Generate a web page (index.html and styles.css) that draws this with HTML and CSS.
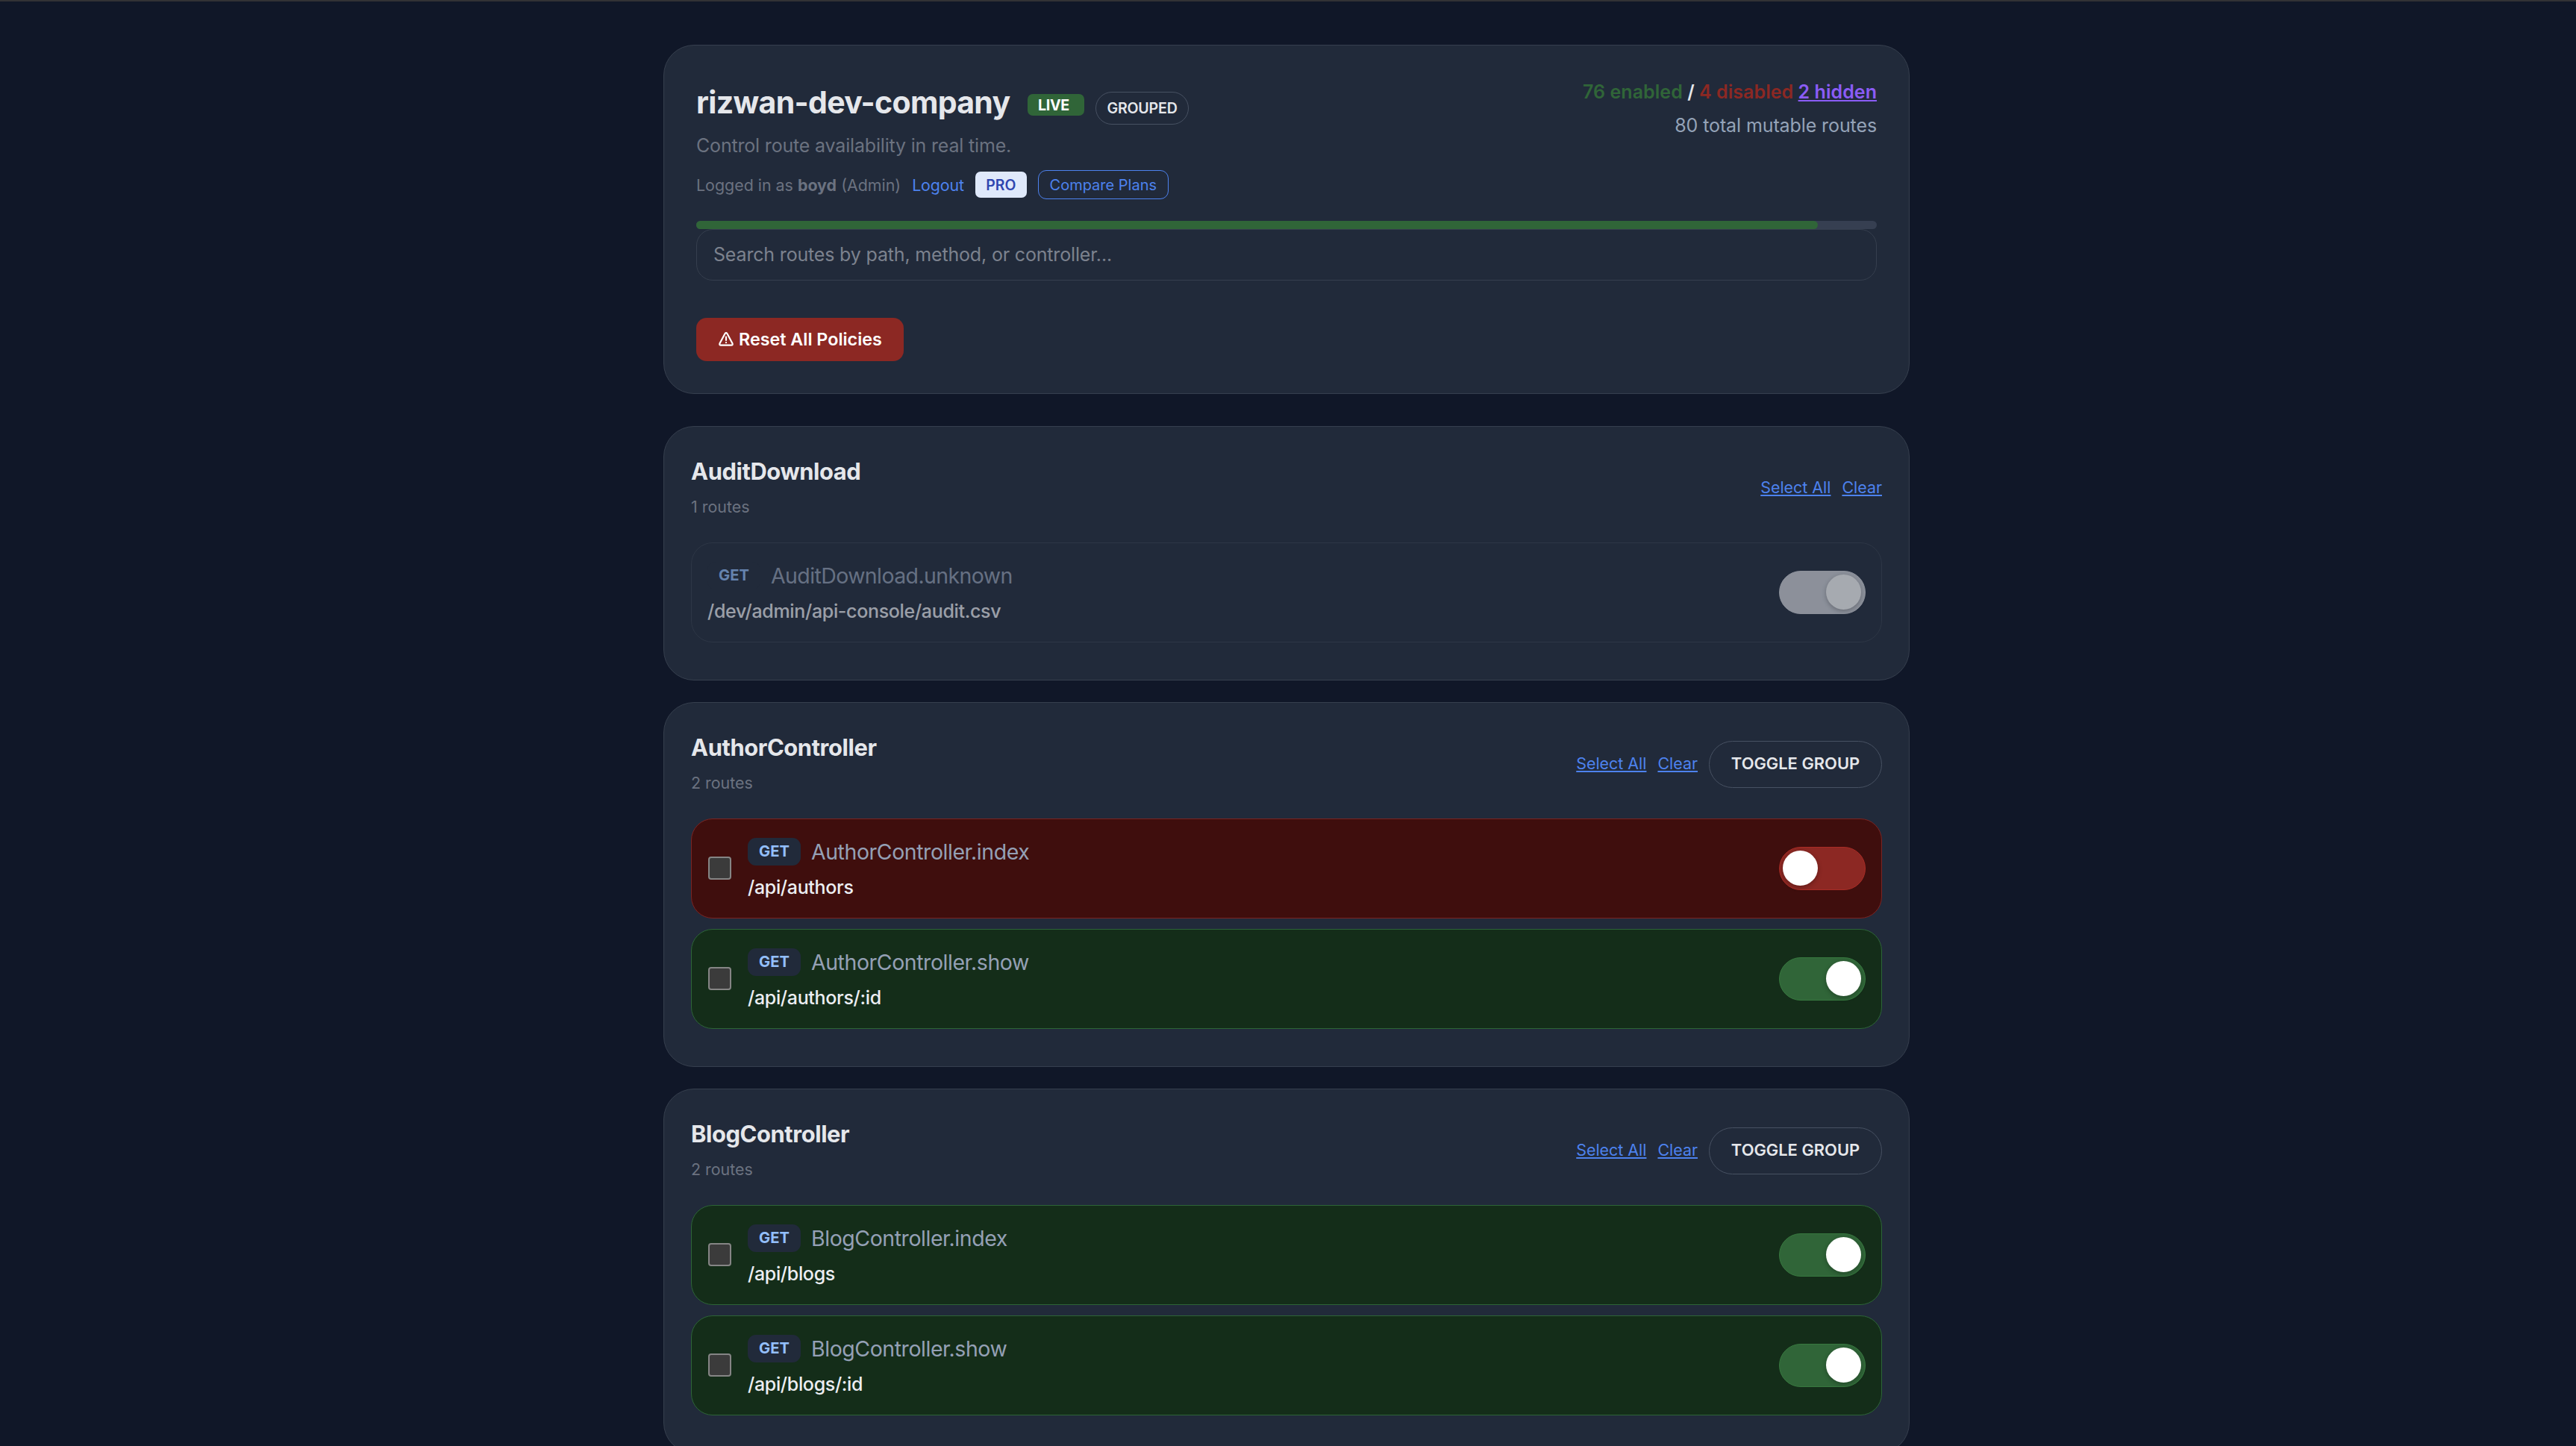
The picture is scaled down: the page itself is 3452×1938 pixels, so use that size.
FILE: index.html
```html
<!DOCTYPE html>
<html lang="en">
<head>
  <meta charset="UTF-8" />
  <meta name="viewport" content="width=device-width, initial-scale=1.0"/>
  <title>API Console</title>
  <link rel="stylesheet" href="styles.css">
</head>
<body>

  <div class="container">

    <!-- Header -->
    <header class="card header">
      <div class="header-top">
        <div>
          <div class="title-row">
            <h1>rizwan-dev-company</h1>
            <span class="badge-live">LIVE</span>
            <button class="pill">GROUPED</button>
          </div>
          <p class="subtitle">Control route availability in real time.</p>
          <div class="user-row">
            <span>Logged in as <strong>boyd</strong> (Admin)</span>
            <a class="logout" href="#">Logout</a>
            <span class="badge-pro">PRO</span>
            <a class="plans" href="#">Compare Plans</a>
          </div>
        </div>
        <div class="stats">
          <div class="counts"><span class="on">76 enabled</span> / <span class="off">4 disabled</span> <a href="#">2 hidden</a></div>
          <div class="total">80 total mutable routes</div>
        </div>
      </div>
      <div class="progress"><div class="progress-fill" style="width: 95%"></div></div>
      <input class="search" type="text" placeholder="Search routes by path, method, or controller..." />
      <button class="reset">
        <svg width="20" height="19" viewBox="0 0 20 19" fill="none" stroke="#fff" stroke-width="2.2" stroke-linejoin="round" stroke-linecap="round">
          <path d="M8.6 2.1 1.5 15.2Q.8 17.7 3 17.7H17Q19.2 17.7 18.5 15.2L11.4 2.1Q10 .3 8.6 2.1Z"/>
          <path d="M10 6.6v4.4M10 14.1v.1"/>
        </svg>
        Reset All Policies
      </button>
    </header>

    <!-- Route groups -->
    <section class="card group">
      <div class="group-head">
        <div>
          <h2>AuditDownload</h2>
          <p>1 routes</p>
        </div>
        <div class="actions">
          <a href="#">Select All</a>
          <a href="#">Clear</a>
        </div>
      </div>
      <div class="route locked">
        <div class="info">
          <div class="line"><span class="method">GET</span><span class="name">AuditDownload.unknown</span></div>
          <div class="path">/dev/admin/api-console/audit.csv</div>
        </div>
        <div class="toggle"><span class="knob"></span></div>
      </div>
    </section>

    <section class="card group">
      <div class="group-head">
        <div>
          <h2>AuthorController</h2>
          <p>2 routes</p>
        </div>
        <div class="actions">
          <a href="#">Select All</a>
          <a href="#">Clear</a>
          <button class="toggle-group">TOGGLE GROUP</button>
        </div>
      </div>
      <div class="route disabled">
        <input type="checkbox" class="check" />
        <div class="info">
          <div class="line"><span class="method">GET</span><span class="name">AuthorController.index</span></div>
          <div class="path">/api/authors</div>
        </div>
        <div class="toggle"><span class="knob"></span></div>
      </div>
      <div class="route enabled">
        <input type="checkbox" class="check" />
        <div class="info">
          <div class="line"><span class="method">GET</span><span class="name">AuthorController.show</span></div>
          <div class="path">/api/authors/:id</div>
        </div>
        <div class="toggle"><span class="knob"></span></div>
      </div>
    </section>

    <section class="card group">
      <div class="group-head">
        <div>
          <h2>BlogController</h2>
          <p>2 routes</p>
        </div>
        <div class="actions">
          <a href="#">Select All</a>
          <a href="#">Clear</a>
          <button class="toggle-group">TOGGLE GROUP</button>
        </div>
      </div>
      <div class="route enabled">
        <input type="checkbox" class="check" />
        <div class="info">
          <div class="line"><span class="method">GET</span><span class="name">BlogController.index</span></div>
          <div class="path">/api/blogs</div>
        </div>
        <div class="toggle"><span class="knob"></span></div>
      </div>
      <div class="route enabled">
        <input type="checkbox" class="check" />
        <div class="info">
          <div class="line"><span class="method">GET</span><span class="name">BlogController.show</span></div>
          <div class="path">/api/blogs/:id</div>
        </div>
        <div class="toggle"><span class="knob"></span></div>
      </div>
    </section>

  </div>

</body>
</html>
```

FILE: styles.css
```css
* {
  box-sizing: border-box;
}

body {
  margin: 0;
  height: 1938px;
  overflow: hidden;
  border-top: 2px solid #323235;
  background: #101728;
  color: #e5e7eb;
  font-family: Inter, "Liberation Sans", sans-serif;
}

h1, h2, p {
  margin: 0;
}

button, input {
  font-family: inherit;
  margin: 0;
}

.container {
  width: 1670px;
  margin-left: 889px;
  padding-top: 58px;
}

.card {
  background: #212a3a;
  border: 1px solid #363f4e;
  border-radius: 41px;
}

/* Header */
.header {
  height: 468px;
  padding: 39px 43px 43px;
  margin-bottom: 43px;
}

.header-top {
  display: flex;
  justify-content: space-between;
}

.title-row {
  display: flex;
  align-items: center;
  height: 74px;
}

h1 {
  width: 444px;
  font-size: 41px;
  font-weight: 650;
  letter-spacing: -0.68px;
  white-space: nowrap;
}

.badge-live {
  width: 76px;
  height: 29px;
  margin: 7px 15px 0 0;
  padding-left: 14px;
  border-radius: 7px;
  background: #306538;
  color: #fff;
  font-size: 19.6px;
  font-weight: 700;
  line-height: 30px;
  letter-spacing: -0.3px;
}

.pill {
  width: 125px;
  height: 44px;
  margin-top: 16px;
  padding: 0;
  border: 1px solid #475162;
  border-radius: 22px;
  background: none;
  color: #e5e7eb;
  font-size: 19.6px;
  font-weight: 600;
  letter-spacing: -0.2px;
}

.subtitle {
  color: #6b7280;
  font-size: 25px;
  line-height: 42px;
  letter-spacing: -0.18px;
}

.user-row {
  display: flex;
  align-items: center;
  gap: 15px;
  height: 39px;
  margin-top: 12px;
  color: #6b7280;
  font-size: 21.4px;
}

.logout {
  color: #4d82ee;
  text-decoration: none;
  letter-spacing: -0.15px;
}

.badge-pro {
  width: 69px;
  height: 35px;
  border-radius: 7px;
  background: #dfe9fb;
  color: #2f46b0;
  font-size: 19.4px;
  font-weight: 600;
  line-height: 36px;
  text-align: center;
}

.plans {
  width: 175px;
  height: 39px;
  border: 1px solid #4d82ee;
  border-radius: 11px;
  color: #4d82ee;
  font-size: 20px;
  line-height: 38px;
  text-align: center;
  text-decoration: none;
}

.stats {
  padding-top: 1px;
  font-size: 25px;
  line-height: 45px;
  text-align: right;
}

.counts {
  font-weight: 600;
  letter-spacing: 0.05px;
}

.on {
  color: #306538;
}

.off {
  color: #8c2823;
}

.counts a {
  color: #8b5cf6;
  text-underline-offset: 2px;
  text-decoration-thickness: 2px;
}

.total {
  color: #94a3b8;
  letter-spacing: -0.1px;
}

.progress {
  height: 11px;
  margin-top: 29px;
  border-radius: 6px;
  background: #363f51;
}

.progress-fill {
  height: 11px;
  border-radius: 6px;
  background: #306538;
}

.search {
  display: block;
  width: 100%;
  height: 69px;
  padding: 0 21px 1px 22px;
  border: 1px solid #363f4e;
  border-radius: 22px;
  background: #212a3a;
  color: #e5e7eb;
  font-size: 25px;
  letter-spacing: -0.17px;
}

.search::placeholder {
  color: #7c828e;
}

.reset {
  display: flex;
  align-items: center;
  gap: 7px;
  width: 278px;
  height: 58px;
  margin-top: 50px;
  padding: 0 0 2px 30px;
  border: 0;
  border-radius: 14px;
  background: #8c2823;
  color: #fff;
  font-size: 23.3px;
  font-weight: 600;
  white-space: nowrap;
}

/* Route groups */
.group {
  padding: 35px 36px 36px;
  margin-bottom: 29px;
}

.group-head {
  display: flex;
  justify-content: space-between;
  align-items: center;
  margin-bottom: 26px;
}

h2 {
  font-size: 30.9px;
  font-weight: 650;
  line-height: 50px;
  letter-spacing: -0.42px;
}

.group-head p {
  color: #6b7280;
  font-size: 21.4px;
  line-height: 44px;
}

.actions {
  display: flex;
  align-items: center;
  gap: 15px;
  font-size: 21.4px;
}

.actions a {
  padding-bottom: 2px;
  color: #4d82ee;
  text-underline-offset: 2px;
  text-decoration-thickness: 2px;
}

.toggle-group {
  width: 232px;
  height: 63px;
  padding: 0 0 2px;
  border: 1px solid #475162;
  border-radius: 32px;
  background: none;
  color: #e5e7eb;
  font-size: 21.9px;
  font-weight: 600;
}

.route {
  display: flex;
  align-items: center;
  height: 134px;
  margin-bottom: 14px;
  padding: 0 21px;
  border: 1px solid #363f4e;
  border-radius: 29px;
}

.enabled {
  background: #142d19;
  border-color: #2d6437;
}

.disabled {
  background: #3f0e0d;
  border-color: #7a2422;
}

.locked {
  opacity: 0.6;
}

.check {
  appearance: none;
  width: 31px;
  height: 31px;
  margin: 0 22px 2px 1px;
  border: 2px solid #858585;
  border-radius: 4px;
  background: #3b3b3b;
}

.info {
  flex: 1;
  padding-top: 1px;
}

.line {
  display: flex;
  align-items: center;
  height: 49px;
}

.method {
  width: 71px;
  height: 37px;
  margin-right: 14px;
  border-radius: 11px;
  background: #212a3a;
  color: #93bffb;
  font-size: 20.2px;
  font-weight: 700;
  line-height: 36px;
  text-align: center;
}

.name {
  color: #94a0b5;
  font-size: 28.5px;
  letter-spacing: -0.45px;
}

.locked .name {
  letter-spacing: -0.6px;
}

.path {
  color: #eceef2;
  font-size: 25px;
  font-weight: 500;
  line-height: 46px;
  letter-spacing: -0.33px;
}

.toggle {
  width: 116px;
  height: 58px;
  padding: 4px;
  border: 1px solid #d3d5db;
  border-radius: 29px;
  background: #d3d5db;
}

.knob {
  display: block;
  width: 47px;
  height: 47px;
  margin-left: 58px;
  border-radius: 50%;
  background: #fff;
  box-shadow: 0 2px 6px rgba(0, 0, 0, 0.3);
}

.enabled .toggle {
  background: #306538;
  border-color: #37783f;
}

.disabled .toggle {
  background: #8c2823;
  border-color: #a82c25;
}

.disabled .knob {
  margin-left: 0;
}
```
